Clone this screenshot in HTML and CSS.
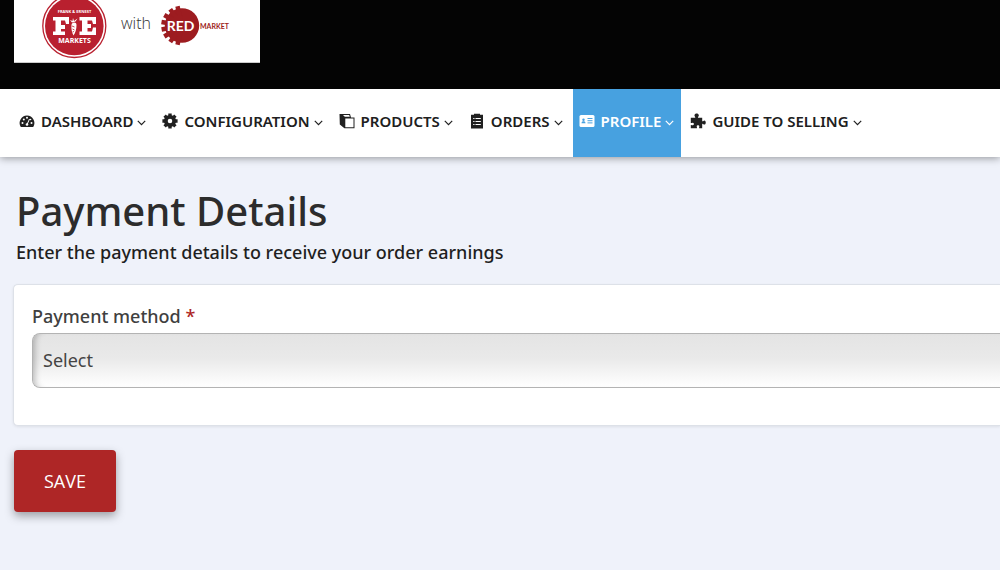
FILE: index.html
```html
<!DOCTYPE html>
<html lang="en">
<head>
<meta charset="utf-8">
<meta name="viewport" content="width=device-width, initial-scale=1">
<title>Payment Details</title>
<link rel="stylesheet" href="styles.css">
</head>
<body>
<svg class="defs" aria-hidden="true">
  <symbol id="chevron" viewBox="0 0 9 6"><path d="M.8 .9 4.5 4.7 8.2 .9" fill="none" stroke="currentColor" stroke-width="1.2"/></symbol>
</svg>
<header class="banner">
  <a class="brand" href="#" aria-label="Frank &amp; Ernest Markets with Red Market">
    <svg class="brand-art" viewBox="0 0 246 62" aria-hidden="true">
      <circle cx="60.300" cy="26" r="31.500" fill="#fff" stroke="#b9202f" stroke-width="1.300"/>
      <circle cx="60.300" cy="26" r="29.300" fill="#b9202f"/>
      <g fill="#fff">
        <text class="brand-tiny" x="60.500" y="13" text-anchor="middle">FRANK &amp; ERNEST</text>
        <path d="M39 17h16v7h-3l-1-3.500h-4V25h4v4h-4v2.500h4V35H39v-3.500h2.500V20.500H39zM65.500 17H82v7h-3l-1-3.500h-4.500V24H77v4h-3.500v3.500H78l1-4h3V35H65.500v-3.500h2.500V20.500h-2.500z"/>
        <path d="M57.500 25c0-3 5-3.500 5 0 0 4-1 7.500-3 10.500-1.500-2.500-2.500-7-2-10.500zM58 22.500l-2-2.500 2.500 1 .5-3 1 3 3.500-2.500-2 3z"/>
        <path d="M58 26l2.500 1M58.500 29l2 1M58.500 32l1.500-.5" stroke="#b9202f" stroke-width=".8"/>
        <text class="brand-markets" x="60.500" y="43" text-anchor="middle">MARKETS</text>
      </g>
      <text class="brand-with" x="107" y="29">with</text>
      <g fill="#9d1c20">
        <circle cx="168" cy="25.500" r="17.200"/>
        <g stroke="#9d1c20" stroke-width="4.500">
          <path d="M168 25.500 163.500 6.300M168 25.500 156.200 9.300M168 25.500 150.300 15M168 25.500 147.500 22M168 25.500 147.600 29.500M168 25.500 150.300 36.500M168 25.500 156.200 42M168 25.500 163.500 44.700"/>
        </g>
        <text class="brand-market" x="186" y="28.500">MARKET</text>
      </g>
      <text class="brand-red" x="166.500" y="31" text-anchor="middle">RED</text>
    </svg>
  </a>
</header>
<nav class="nav" aria-label="Main">
  <a class="nav-item" href="#">
    <svg class="icon" viewBox="0 0 16 16"><path fill="currentColor" d="M8 2.500A7.500 7.500 0 0 0 1.800 14h12.400A7.500 7.500 0 0 0 8 2.500z"/><g fill="#fff"><circle cx="3.500" cy="10" r="1"/><circle cx="4.800" cy="6.500" r="1"/><circle cx="8" cy="4.800" r="1"/><circle cx="12.500" cy="10" r="1"/><circle cx="11.500" cy="6.500" r=".8"/></g><path d="m10.500 6-2.200 5" stroke="#fff"/><circle cx="8" cy="11.500" r="1.300" fill="#fff"/></svg>
    <span>DASHBOARD</span><svg class="chevron"><use href="#chevron"/></svg>
  </a>
  <a class="nav-item" href="#">
    <svg class="icon" viewBox="0 0 16 16"><circle cx="8" cy="8" r="4.200" fill="none" stroke="currentColor" stroke-width="3.800"/><path stroke="currentColor" stroke-width="3.400" d="M8 .4v3M8 12.600v3M.4 8h3M12.600 8h3M2.600 2.600l2 2M11.400 11.400l2 2M2.600 13.400l2-2M11.400 4.600l2-2"/></svg>
    <span>CONFIGURATION</span><svg class="chevron"><use href="#chevron"/></svg>
  </a>
  <a class="nav-item" href="#">
    <svg class="icon" viewBox="0 0 16 16"><path fill="currentColor" d="M.5 1h10.500l1 3.500h3.500v10.700H5.400L.8 11.500z"/><path fill="#fff" d="M6.300 5.500h8.200v8.700H6.300zM4 2h6.200l.6 1.800H5.800z"/></svg>
    <span>PRODUCTS</span><svg class="chevron"><use href="#chevron"/></svg>
  </a>
  <a class="nav-item" href="#">
    <svg class="icon" viewBox="0 0 16 16"><path fill="currentColor" d="M2 1.800h3V.8h6v1h3v13.600H2z"/><path stroke="#fff" stroke-width="1.200" d="M4.200 5.500h1.300m1 0h5.300M4.200 8.500h1.300m1 0h5.300M4.200 11.500h1.300m1 0h5.300"/></svg>
    <span>ORDERS</span><svg class="chevron"><use href="#chevron"/></svg>
  </a>
  <a class="nav-item nav-item-active" href="#" aria-current="page">
    <svg class="icon" viewBox="0 0 16 16"><rect x=".5" y="2" width="15" height="12" rx="1.500" fill="currentColor"/><g fill="#47a1e0"><circle cx="4.500" cy="6.700" r="1.200"/><path d="M2.500 10.200c0-2.500 4-2.500 4 0z"/></g><path stroke="#47a1e0" d="M8.500 5.500h5m-5 2.200h5m-5 2.200h5"/></svg>
    <span>PROFILE</span><svg class="chevron"><use href="#chevron"/></svg>
  </a>
  <a class="nav-item" href="#">
    <svg class="icon" viewBox="0 0 16 16"><path fill="currentColor" d="M.8 4.800h4.400C5.600 3.800 4.300 3.300 4.500 2c.3-2.100 4-2.100 4.300 0 .2 1.300-1.100 1.800-.8 2.800h4.200v3.400c1 .3 1.300-.8 2.200-.8 1.800 0 1.800 4.200 0 4.200-.9 0-1.200-1-2.200-.8v4.400H9.200c-.3-1 .2-1.300.1-2-.1-1.300-2.500-1.300-2.600 0 0 .7.500 1 .2 2H.8V12c1-.2 1.200.4 2.100.3 1.300-.2 1.300-2.300 0-2.500C2 9.700 1.800 10.300.8 10z"/></svg>
    <span>GUIDE TO SELLING</span><svg class="chevron"><use href="#chevron"/></svg>
  </a>
</nav>
<main class="page">
  <h1 class="title">Payment Details</h1>
  <p class="subtitle">Enter the payment details to receive your order earnings</p>
  <form class="form">
    <div class="card">
      <label class="label" for="method">Payment method <span class="required">*</span></label>
      <select class="select" id="method" required><option>Select</option></select>
    </div>
    <button class="save" type="button">SAVE</button>
  </form>
</main>
</body>
</html>
```
FILE: styles.css
```css
* { box-sizing: border-box; }
body {
  margin: 0;
  min-height: 100vh;
  background: #eff2fa;
  color: #2c2c2c;
  font-family: "Noto Sans", "Open Sans", sans-serif;
}
.defs { display: none; }

.banner { background: #040404; padding: 0 14px 26px; }
.brand { display: block; width: 246px; background: #fff; border-bottom: 1px solid #ccc; }
.brand-art { display: block; width: 100%; }
.brand-tiny { font: 700 4px "Open Sans", sans-serif; }
.brand-markets { font: 700 7px "Open Sans", sans-serif; }
.brand-with { font: 400 16px "Open Sans", sans-serif; font-weight: 300; fill: #333; }
.brand-red { font: 700 14px Lato, sans-serif; fill: #fff; }
.brand-market { font: 700 7px Lato, sans-serif; }

.nav {
  display: flex;
  gap: 3px;
  padding: 0 13px;
  background: #fff;
  box-shadow: 0 1px 8px rgba(0, 0, 0, .4);
}
.nav-item {
  display: flex;
  align-items: center;
  padding: 20px 7px 24px 6px;
  color: #202020;
  font: 600 15px/24px "Noto Sans", sans-serif;
  text-decoration: none;
  white-space: nowrap;
}
.nav-item-active { background: #47a1e0; color: #fff; }
.icon { width: 16px; height: 16px; margin-right: 6px; }
.chevron { width: 9px; height: 6px; margin: 4px 0 0 4px; }

.page { padding: 27px 0 40px 13px; }
.title { margin: 0 3px; font-size: 40px; line-height: 54px; font-weight: 500; }
.subtitle { margin: 0 3px; font-size: 18px; line-height: 28px; font-weight: 500; color: #1f1f1f; }
.form { margin-top: 18px; }
.card {
  padding: 18px 0 37px 18px;
  background: #fff;
  border: 1px solid #dde1e8;
  border-right: 0;
  border-radius: 5px 0 0 5px;
  box-shadow: 0 1px 3px rgba(0, 0, 0, .08);
}
.label { display: block; font-size: 18px; line-height: 26px; font-weight: 500; color: #404040; margin-bottom: 4px; }
.required { color: #ae2626; }
.select {
  display: block;
  width: 100%;
  height: 55px;
  padding: 0 10px 1px;
  appearance: none;
  border: 1px solid #b3b3b3;
  border-right: 0;
  border-radius: 8px 0 0 8px;
  background: linear-gradient(#e4e4e4, #e9e9e9 45%, #fff);
  box-shadow: inset 7px 0 6px -5px rgba(0, 0, 0, .25);
  color: #444;
  font: 400 18px "Noto Sans", sans-serif;
}
.save {
  margin: 24px 0 0 1px;
  padding: 18px 30px;
  border: 0;
  border-radius: 4px;
  background: #ae2626;
  box-shadow: 0 4px 10px rgba(0, 0, 0, .35);
  color: #fff;
  font: 400 18px/26px "Open Sans", sans-serif;
}
```
